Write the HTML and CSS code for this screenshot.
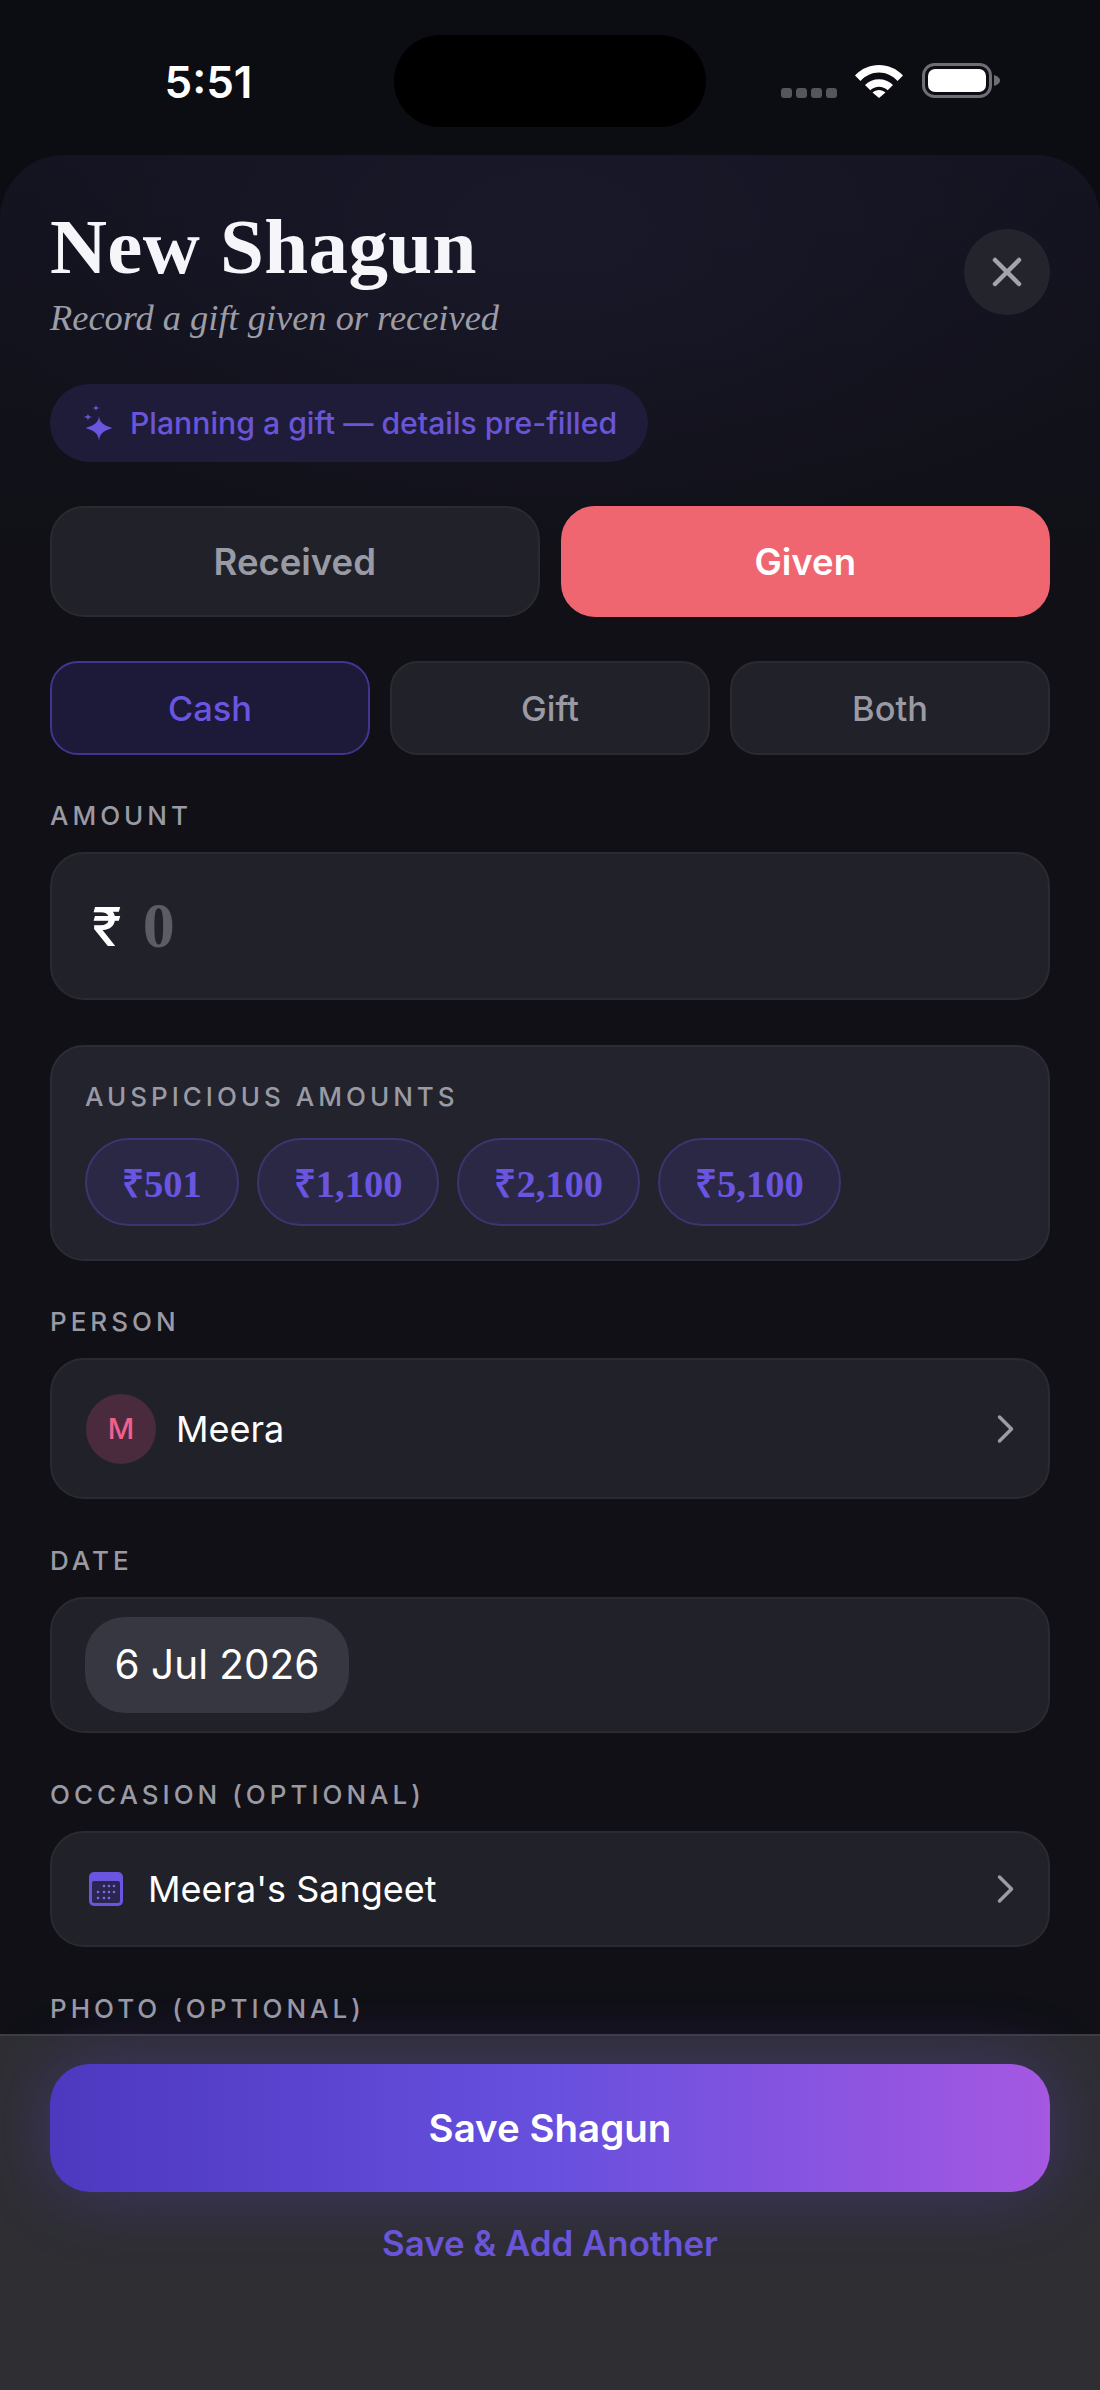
FILE: index.html
```html
<!DOCTYPE html>
<html lang="en">
<head>
	<meta charset="utf-8">
	<title>New Shagun</title>
	<link rel="stylesheet" href="styles.css">
</head>
<body>
	<div class="status-bar">
		<div class="time">5:51</div>
		<div class="island"></div>
		<div class="status-icons">
			<div class="signal"><i></i><i></i><i></i><i></i></div>
			<svg class="wifi" width="48" height="35" viewBox="0 0 48 35">
				<path d="M0 12.500C6.500 5.500 15 2 24 2s17.500 3.500 24 10.500l-5.500 5.500C37.500 12.500 31 9.500 24 9.500S10.500 12.500 5.500 18z" fill="#fff"/>
				<path d="M10 22c3.800-3.800 8.800-5.800 14-5.800s10.200 2 14 5.800l-5.300 5.300c-2.400-2.300-5.500-3.600-8.700-3.600s-6.300 1.300-8.700 3.600z" fill="#fff"/>
				<path d="M17.500 29.500c1.800-1.600 4.100-2.500 6.500-2.500s4.700.9 6.500 2.500L24 35z" fill="#fff"/>
			</svg>
			<svg class="battery" width="78" height="35" viewBox="0 0 78 35">
				<rect x="1.500" y="1.500" width="67" height="32" rx="11" fill="none" stroke="#6e6e74" stroke-width="3"/>
				<rect x="6" y="6" width="58" height="23" rx="7" fill="#fff"/>
				<path d="M72 12c3.500 1 6 3 6 5.500S75.500 22 72 23z" fill="#6e6e74"/>
			</svg>
		</div>
	</div>

	<div class="sheet">
		<div class="head">
			<div>
				<h1>New Shagun</h1>
				<p class="subtitle">Record a gift given or received</p>
			</div>
			<button class="close">
				<svg width="30" height="30" viewBox="0 0 30 30">
					<path d="M3 3l24 24M27 3L3 27" stroke="#a3a3ad" stroke-width="4.500" stroke-linecap="round"/>
				</svg>
			</button>
		</div>

		<div class="prefill">
			<svg width="30" height="36" viewBox="0 0 30 36">
				<path d="M16 11c.6 5.500 3 9 13.500 12C19 26 16.600 29.500 16 36c-.6-6.500-3-10-13.500-13C13 20 15.400 16.500 16 11z" fill="#6a55e0"/>
				<path d="M5 8.500c.2 2 .8 3 4.500 3.500C5.800 12.500 5.200 13.500 5 16c-.2-2.500-.8-3.500-4.500-4C4.200 11.500 4.800 10.500 5 8.500zM13 0c.2 1.700.7 2.400 3.500 3C13.700 3.500 13.200 4.300 13 6c-.2-1.700-.7-2.500-3.500-3C12.300 2.400 12.800 1.700 13 0z" fill="#6a55e0"/>
			</svg>
			<span>Planning a gift — details pre-filled</span>
		</div>

		<div class="direction">
			<button class="dir-btn">Received</button>
			<button class="dir-btn dir-on">Given</button>
		</div>

		<div class="kind">
			<button class="kind-btn kind-on">Cash</button>
			<button class="kind-btn">Gift</button>
			<button class="kind-btn">Both</button>
		</div>

		<section>
			<div class="label">AMOUNT</div>
			<div class="box amount">
				<span class="rupee">₹</span>
				<span class="zero">0</span>
			</div>
		</section>

		<div class="box auspicious">
			<div class="label">AUSPICIOUS AMOUNTS</div>
			<div class="chips">
				<button class="chip">₹501</button>
				<button class="chip">₹1,100</button>
				<button class="chip">₹2,100</button>
				<button class="chip">₹5,100</button>
			</div>
		</div>

		<section>
			<div class="label">PERSON</div>
			<div class="box row person">
				<div class="avatar">M</div>
				<span class="row-text">Meera</span>
				<svg class="chevron" width="20" height="30" viewBox="0 0 20 30">
					<path d="M3.500 3l12 12-12 12" fill="none" stroke="#9c9ca6" stroke-width="3.500" stroke-linecap="round" stroke-linejoin="round"/>
				</svg>
			</div>
		</section>

		<section>
			<div class="label">DATE</div>
			<div class="box date">
				<div class="date-chip">6 Jul 2026</div>
			</div>
		</section>

		<section>
			<div class="label">OCCASION (OPTIONAL)</div>
			<div class="box row occasion">
				<svg class="cal" width="34" height="34" viewBox="0 0 34 34">
					<rect width="34" height="34" rx="5" fill="#6a55e0"/>
					<rect x="3" y="9" width="28" height="22" rx="2" fill="#2a2650"/>
					<g fill="#7d6ae6">
						<circle cx="15" cy="14" r="1.300"/><circle cx="20" cy="14" r="1.300"/><circle cx="25" cy="14" r="1.300"/>
						<circle cx="9" cy="20" r="1.300"/><circle cx="15" cy="20" r="1.300"/><circle cx="20" cy="20" r="1.300"/><circle cx="25" cy="20" r="1.300"/>
						<circle cx="9" cy="26" r="1.300"/><circle cx="15" cy="26" r="1.300"/><circle cx="20" cy="26" r="1.300"/>
					</g>
				</svg>
				<span class="row-text">Meera's Sangeet</span>
				<svg class="chevron" width="20" height="30" viewBox="0 0 20 30">
					<path d="M3.500 3l12 12-12 12" fill="none" stroke="#9c9ca6" stroke-width="3.500" stroke-linecap="round" stroke-linejoin="round"/>
				</svg>
			</div>
		</section>

		<section>
			<div class="label">PHOTO (OPTIONAL)</div>
		</section>
	</div>

	<div class="footer">
		<button class="save">Save Shagun</button>
		<button class="save-another">Save &amp; Add Another</button>
	</div>
</body>
</html>
```

FILE: styles.css
```css
* {
	box-sizing: border-box;
}

html, body {
	margin: 0;
	height: 100%;
}

body {
	width: 1100px;
	height: 2390px;
	overflow: hidden;
	display: flex;
	flex-direction: column;
	background: #0c0c13;
	color: #fff;
	font-family: Inter, "Liberation Sans", sans-serif;
}

button {
	font-family: inherit;
	border: none;
	padding: 0;
	cursor: pointer;
}

/* status bar */
.status-bar {
	flex: none;
	height: 155px;
	display: grid;
	grid-template-columns: 394px 312px 1fr;
}

.time {
	padding: 57px 0 0 23px;
	text-align: center;
	font-size: 44px;
	line-height: 50px;
	font-weight: 600;
}

.island {
	margin-top: 35px;
	height: 92px;
	background: #000;
	border-radius: 46px;
}

.status-icons {
	display: flex;
	align-items: flex-start;
	padding: 63px 0 0 75px;
}

.signal {
	display: flex;
	gap: 4px;
	margin: 25px 18px 0 0;
}

.signal i {
	width: 11px;
	height: 10px;
	border-radius: 3px;
	background: #55555c;
}

.battery {
	margin-left: 19px;
}

/* sheet */
.sheet {
	flex: 1;
	min-height: 0;
	overflow: hidden;
	padding: 50px 50px 0;
	display: flex;
	flex-direction: column;
	gap: 44px;
	border-radius: 64px 64px 0 0;
	background:
		radial-gradient(ellipse 620px 340px at 50% 70px, #191829 0%, rgba(25, 24, 41, 0) 100%),
		linear-gradient(#131320 0, #101016 420px);
}

/* the form runs past the footer, so rows keep their height and get clipped */
.sheet > * {
	flex: none;
}

.head {
	display: flex;
	justify-content: space-between;
	align-items: flex-start;
}

h1 {
	margin: 0;
	font-family: "Liberation Serif", serif;
	font-size: 79px;
	line-height: 84px;
	letter-spacing: 0.300px;
	font-weight: 700;
	color: #f6f6fa;
}

.subtitle {
	margin: 7px 0 0;
	font-family: "Liberation Serif", serif;
	font-style: italic;
	font-size: 36.400px;
	line-height: 44px;
	color: #9d9da8;
}

.close {
	width: 86px;
	height: 86px;
	margin-top: 24px;
	border-radius: 50%;
	background: #24242d;
	display: flex;
	align-items: center;
	justify-content: center;
}

.prefill {
	align-self: flex-start;
	height: 78px;
	width: 598px;
	padding-left: 33px;
	display: flex;
	align-items: center;
	gap: 17px;
	border-radius: 39px;
	background: #1f1c3a;
	color: #6a55d8;
	font-size: 30.200px;
	font-weight: 500;
}

.direction {
	display: flex;
	gap: 21px;
}

.dir-btn {
	flex: 1;
	height: 111px;
	border-radius: 34px;
	background: #212229;
	border: 2px solid #2a2b32;
	color: #9a9aa5;
	font-size: 36.500px;
	font-weight: 600;
}

.dir-on {
	background: #ef6570;
	border-color: #ef6570;
	color: #fff;
}

.kind {
	display: flex;
	gap: 20px;
}

.kind-btn {
	flex: 1;
	height: 94px;
	border-radius: 28px;
	background: #212229;
	border: 2px solid #2a2b32;
	color: #9a9aa5;
	font-size: 34.400px;
	font-weight: 500;
}

.kind-on {
	background: #1c1a38;
	border-color: #40358f;
	color: #6a55e0;
}

section {
	margin-bottom: 1px;
}

.label {
	height: 34px;
	margin-bottom: 19px;
	line-height: 34px;
	font-size: 26px;
	font-weight: 500;
	letter-spacing: 4px;
	color: #9a9aa5;
}

.box {
	background: #212229;
	border: 2px solid #2a2b32;
	border-radius: 34px;
}

.amount {
	height: 148px;
	display: flex;
	align-items: center;
	padding-left: 40px;
	gap: 21px;
}

.rupee {
	font-size: 54px;
	font-weight: 500;
	color: #fff;
}

.zero {
	font-family: "Liberation Serif", serif;
	font-size: 64px;
	font-weight: 700;
	color: #5c5c65;
}

.auspicious {
	height: 216px;
	padding: 33px 33px 0;
	background: #22232d;
	border-color: #2c2c39;
}

.auspicious .label {
	margin-bottom: 24px;
}

.chips {
	display: flex;
	gap: 18px;
}

.chip {
	height: 88px;
	padding: 0 35px;
	border-radius: 44px;
	background: #2a2845;
	border: 2px solid #3b3570;
	color: #6a55e0;
	font-family: "Liberation Serif", serif;
	font-size: 38.500px;
	font-weight: 700;
}

.row {
	display: flex;
	align-items: center;
	padding: 0 32px 0 34px;
}

.row-text {
	flex: 1;
	font-size: 36px;
	color: #fff;
}

.person {
	height: 141px;
	gap: 20px;
}

.avatar {
	width: 70px;
	height: 70px;
	border-radius: 50%;
	background: #4a2b3e;
	color: #f0608f;
	font-size: 29px;
	font-weight: 500;
	display: flex;
	align-items: center;
	justify-content: center;
}

.date {
	height: 136px;
	padding: 18px 33px;
}

.date-chip {
	width: 264px;
	height: 96px;
	border-radius: 40px;
	background: #363741;
	font-size: 40.500px;
	line-height: 96px;
	text-align: center;
}

.occasion {
	height: 116px;
	gap: 25px;
	padding-left: 37px;
}

.cal {
	flex: none;
}

/* bottom actions */
.footer {
	flex: none;
	height: 356px;
	padding: 28px 50px 0;
	display: flex;
	flex-direction: column;
	align-items: center;
	border-top: 2px solid #3d3d46;
	background: #2e2e33;
}

.save {
	width: 100%;
	height: 128px;
	border-radius: 40px;
	background: linear-gradient(90deg, #4d38c0 0%, #6750de 50%, #a558e2 100%);
	box-shadow: 0 0 70px rgba(100, 75, 220, 0.32);
	color: #fff;
	font-size: 38.500px;
	font-weight: 600;
}

.save-another {
	margin-top: 30px;
	background: none;
	color: #6a55d8;
	font-size: 34.800px;
	line-height: 42px;
	font-weight: 600;
}
```
